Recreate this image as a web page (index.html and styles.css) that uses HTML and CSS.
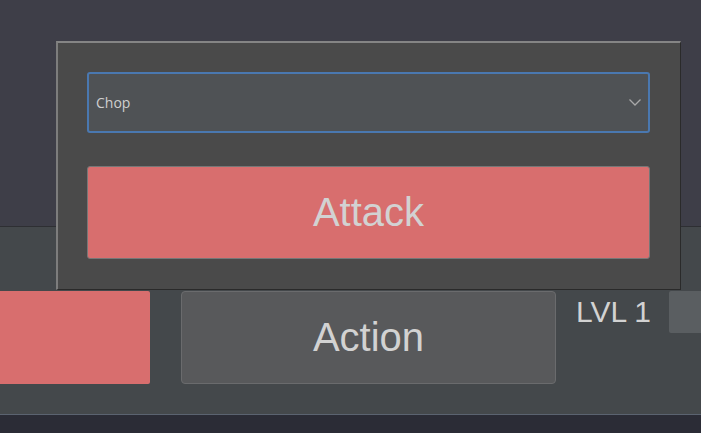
FILE: index.html
```html
<!DOCTYPE html>
<html>
<head>
<meta charset="utf-8">
<link rel="stylesheet" href="styles.css">
</head>
<body>
<div class="screen">
  <div class="top-area"></div>
  <div class="panel">
    <div class="panel-row">
      <div class="red-block"></div>
      <div class="action-btn">Action</div>
      <div class="lvl">LVL 1</div>
      <div class="gray-block"></div>
    </div>
  </div>
  <div class="bottom-strip"></div>

  <div class="popup">
    <div class="select">
      <span class="select-text">Chop</span>
      <svg class="chevron" width="12" height="7" viewBox="0 0 12 7"><path d="M0.5 0.5 L6 6 L11.5 0.5" fill="none" stroke="#a8a8a8" stroke-width="1.3"/></svg>
    </div>
    <div class="attack-btn">Attack</div>
  </div>
</div>
</body>
</html>
```

FILE: styles.css
```css
* { box-sizing: border-box; }
html, body { margin: 0; padding: 0; }
body {
  width: 701px;
  height: 433px;
  overflow: hidden;
  background: #2b2c36;
  font-family: "Liberation Sans", Arial, sans-serif;
}
.screen {
  position: relative;
  width: 701px;
  height: 433px;
  display: flex;
  flex-direction: column;
}
.top-area {
  height: 227px;
  background: #3e3e48;
  border-bottom: 1px solid #2e2f33;
}
.panel {
  height: 188px;
  background: #44484b;
  border-bottom: 1px solid #5b6370;
  padding-top: 64px;
}
.panel-row {
  display: flex;
  align-items: flex-start;
}
.red-block {
  width: 150px;
  height: 93px;
  background: #d86e6e;
  border-radius: 0 2px 2px 0;
  flex: none;
}
.action-btn {
  margin-left: 31px;
  width: 375px;
  height: 93px;
  background: #58595b;
  border: 1px solid #6a6b6d;
  border-radius: 4px;
  color: #d2d2d2;
  font-size: 40px;
  display: flex;
  align-items: center;
  justify-content: center;
  flex: none;
}
.lvl {
  margin-left: 20px;
  color: #d2d2d2;
  font-size: 30px;
  line-height: 42px;
  flex: none;
}
.gray-block {
  margin-left: auto;
  width: 32px;
  height: 42px;
  background: #5a5e61;
  border-radius: 2px 0 0 2px;
  flex: none;
}
.bottom-strip {
  flex: 1;
  background: #2b2c36;
}
.popup {
  position: absolute;
  left: 56px;
  top: 41px;
  width: 625px;
  height: 249px;
  background: #4a4a4a;
  border-top: 2px solid #858585;
  border-left: 2px solid #7d7d7d;
  border-right: 1px solid #2a2a2a;
  border-bottom: 1px solid #2a2a2a;
  padding: 29px 30px 0 29px;
  display: flex;
  flex-direction: column;
}
.select {
  height: 61px;
  background: #4f5255;
  border: 2px solid #4a78b0;
  border-radius: 3px;
  display: flex;
  align-items: center;
  justify-content: space-between;
  padding: 0 7px 0 7px;
}
.select-text {
  font-family: "Open Sans", "Noto Sans", sans-serif;
  font-size: 14px;
  color: #cfcfcf;
}
.chevron { display: block; margin-top: -1px; }
.attack-btn {
  margin-top: 33px;
  height: 93px;
  background: #d86e6e;
  border: 1px solid #777;
  border-radius: 3px;
  color: #d2d2d2;
  font-size: 40px;
  display: flex;
  align-items: center;
  justify-content: center;
}
```
